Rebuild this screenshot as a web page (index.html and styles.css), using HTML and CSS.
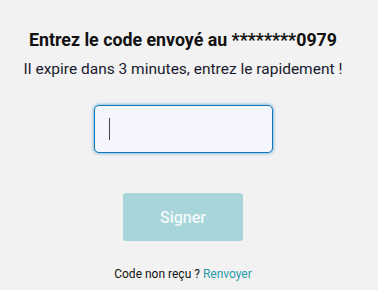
FILE: index.html
```html
<!DOCTYPE html>
<html lang="fr">
<head>
<meta charset="utf-8">
<link rel="stylesheet" href="styles.css">
</head>
<body>
<main class="page">
  <h1 class="title">Entrez le code envoyé au ********0979</h1>
  <p class="subtitle">Il expire dans 3 minutes, entrez le rapidement !</p>
  <div class="field"><span class="caret"></span></div>
  <button class="btn" type="button">Signer</button>
  <p class="resend">Code non reçu ? <a class="link" href="#">Renvoyer</a></p>
</main>
</body>
</html>
```
FILE: styles.css
```css
html, body {
  margin: 0;
  padding: 0;
  background: #f2f2f2;
}
.page {
  width: 366px;
  height: 290px;
  display: flex;
  flex-direction: column;
  align-items: center;
  font-family: Roboto, "Liberation Sans", sans-serif;
  color: #111;
}
.title {
  margin: 29px 0 0;
  font-size: 17.8px;
  line-height: 21px;
  font-weight: 700;
  color: #111;
}
.subtitle {
  margin: 10px 0 0;
  font-size: 15.5px;
  line-height: 18px;
  color: #1a1a2e;
}
.field {
  margin-top: 27px;
  width: 177px;
  height: 46px;
  box-sizing: content-box;
  border: 1.5px solid #1177bb;
  border-radius: 5px;
  background: #f4f5fd;
  box-shadow: 0 0 3px 1px rgba(17,119,187,0.45);
  display: flex;
  align-items: center;
}
.caret {
  width: 1.5px;
  height: 22px;
  background: #444;
  margin-left: 14px;
}
.btn {
  margin-top: 40px;
  width: 120px;
  height: 48px;
  border: none;
  border-radius: 3px;
  background: #a8d5d9;
  color: #f2fafa;
  font-family: Roboto, "Liberation Sans", sans-serif;
  font-size: 16px;
  font-weight: 500;
  padding: 0;
}
.resend {
  margin: 26px 0 0;
  font-size: 12px;
  line-height: 14px;
  color: #111;
}
.link {
  color: #2a9aa8;
  text-decoration: none;
}
```
